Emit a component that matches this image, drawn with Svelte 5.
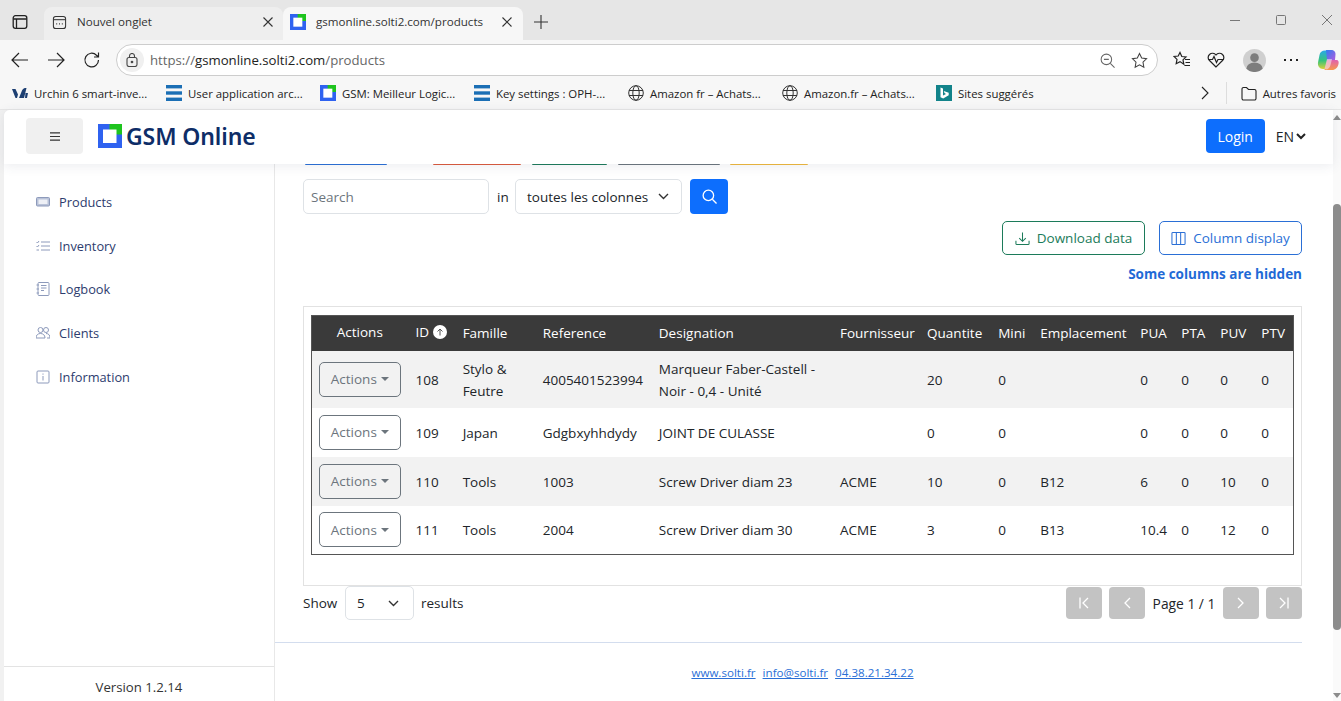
<script>
  const nav = [
    { label: 'Products', icon: 'box' },
    { label: 'Inventory', icon: 'list' },
    { label: 'Logbook', icon: 'book' },
    { label: 'Clients', icon: 'people' },
    { label: 'Information', icon: 'info' }
  ];
  const cols = ['Famille', 'Reference', 'Designation', 'Fournisseur', 'Quantite', 'Mini', 'Emplacement', 'PUA', 'PTA', 'PUV', 'PTV'];
  const rows = [
    ['108', 'Stylo & Feutre', '4005401523994', 'Marqueur Faber-Castell - Noir - 0,4 - Unité', '', '20', '0', '', '0', '0', '0', '0'],
    ['109', 'Japan', 'Gdgbxyhhdydy', 'JOINT DE CULASSE', '', '0', '0', '', '0', '0', '0', '0'],
    ['110', 'Tools', '1003', 'Screw Driver diam 23', 'ACME', '10', '0', 'B12', '6', '0', '10', '0'],
    ['111', 'Tools', '2004', 'Screw Driver diam 30', 'ACME', '3', '0', 'B13', '10.4', '0', '12', '0']
  ];
</script>

{#snippet logo(size)}
  <svg width={size} height={size} viewBox="0 0 24 24">
    <rect width="24" height="24" fill="#2f62f0" />
    <rect x="11.5" y="0" width="12.5" height="10.5" fill="#1ec41e" />
    <rect x="5" y="5.5" width="13.5" height="13.5" fill="#fff" />
  </svg>
{/snippet}

{#snippet bars()}
  <svg width="16" height="16" viewBox="0 0 16 16" fill="#1b6fb5"><rect width="16" height="3.4" y="0" /><rect width="16" height="3.4" y="6.3" /><rect width="16" height="3.4" y="12.6" /></svg>
{/snippet}

{#snippet globe()}
  <svg width="16" height="16" viewBox="0 0 16 16" fill="none" stroke="#333"><circle cx="8" cy="8" r="7.3" /><ellipse cx="8" cy="8" rx="3.2" ry="7.3" /><path d="M1 5.5h14M1 10.5h14" /></svg>
{/snippet}

<div class="browser">
  <div class="tabbar">
    <svg class="tabgroup" width="16" height="16" viewBox="0 0 16 16" fill="none" stroke="#222" stroke-width="1.3"><rect x="1.2" y="1.7" width="13.6" height="12.6" rx="2.2" /><path d="M1.2 5h13.6M4.5 5v9" /></svg>
    <div class="tab idle">
      <svg width="15" height="15" viewBox="0 0 16 16" fill="none" stroke="#333" stroke-width="1.1"><rect x="1.5" y="1.5" width="13" height="13" rx="2.5" /><path d="M1.5 5h13" /><path d="M4.5 9.5h1M7.5 9.5h1M10.5 9.5h1" stroke-width="1.4" /></svg>
      <span class="tabtitle">Nouvel onglet</span>
      <svg class="close" width="10" height="10" viewBox="0 0 10 10" stroke="#333" stroke-width="1.1"><path d="M.5.5l9 9M9.5.5l-9 9" /></svg>
    </div>
    <div class="tab active">
      {@render logo(16)}
      <span class="tabtitle">gsmonline.solti2.com/products</span>
      <svg class="close" width="10" height="10" viewBox="0 0 10 10" stroke="#333" stroke-width="1.1"><path d="M.5.5l9 9M9.5.5l-9 9" /></svg>
    </div>
    <svg class="plus" width="14" height="14" viewBox="0 0 14 14" stroke="#333" stroke-width="1.1"><path d="M7 0v14M0 7h14" /></svg>
    <div class="winctl">
      <svg width="10" height="10" viewBox="0 0 10 10" stroke="#777"><path d="M0 5.5h10" /></svg>
      <svg width="10" height="10" viewBox="0 0 10 10" fill="none" stroke="#777"><rect x=".5" y=".5" width="9" height="9" rx="1" /></svg>
      <svg width="10" height="10" viewBox="0 0 10 10" stroke="#777"><path d="M0 0l10 10M10 0L0 10" /></svg>
    </div>
  </div>

  <div class="toolbar">
    <svg class="navicon" width="18" height="16" viewBox="0 0 18 16" fill="none" stroke="#222" stroke-width="1.2"><path d="M17 8H1M8 1L1 8l7 7" /></svg>
    <svg class="navicon" width="18" height="16" viewBox="0 0 18 16" fill="none" stroke="#222" stroke-width="1.2"><path d="M1 8h16M10 1l7 7-7 7" /></svg>
    <svg class="navicon" width="18" height="18" viewBox="0 0 18 18" fill="none" stroke="#222" stroke-width="1.2"><path d="M15.5 9a6.8 6.8 0 1 1-2-4.8L15.5 6M15.5 1.5V6H11" /></svg>
    <div class="address">
      <span class="lock"><svg width="12" height="14" viewBox="0 0 12 14" fill="none" stroke="#444" stroke-width="1.1"><rect x="1" y="4.5" width="10" height="9" rx="2" /><path d="M3.5 4.5V3a2.5 2.5 0 0 1 5 0v1.5" /><circle cx="6" cy="9" r=".8" fill="#444" /></svg></span>
      <span class="url">https://<b>gsmonline.solti2.com</b>/products</span>
      <svg class="zoomout" width="15" height="15" viewBox="0 0 16 16" fill="none" stroke="#666" stroke-width="1.1"><circle cx="6.8" cy="6.8" r="5.6" /><path d="M11 11l4.5 4.5M4.2 6.8h5.2" /></svg>
      <svg class="star" width="17" height="17" viewBox="0 0 18 18" fill="none" stroke="#444" stroke-width="1.1"><path d="M9 1.5l2.3 4.9 5.2.7-3.8 3.7.9 5.3L9 13.5l-4.6 2.6.9-5.3L1.5 7.1l5.2-.7z" /></svg>
    </div>
    <div class="extras">
      <svg width="18" height="18" viewBox="0 0 18 18" fill="none" stroke="#222" stroke-width="1.2"><path d="M7 1.5l1.8 4 4.2.5-3 2.9.8 4.3L7 10.600l-3.800 2.100.8-4.300-3-2.900 4.200-.5zM12 8.500h5M12.500 11.500h4.500M11.500 14.500h5.500" /></svg>
      <svg width="18" height="18" viewBox="0 0 18 18" fill="none" stroke="#222" stroke-width="1.2"><path d="M9 16L2.500 9.500a4 4 0 0 1 0-6 4.300 4.300 0 0 1 6.500.5 4.300 4.300 0 0 1 6.500-.5 4 4 0 0 1 0 6z" /><path d="M1.500 8.500h4l1.500-3 2.500 6 1.500-3h5.500" /></svg>
      <svg class="avatar" width="23" height="23" viewBox="0 0 24 24"><circle cx="12" cy="12" r="12" fill="#cfcfcf" /><circle cx="12" cy="9" r="4.500" fill="#7d7d7d" /><path d="M3.500 20.500a8.500 6.500 0 0 1 17 0 12 12 0 0 1-17 0z" fill="#7d7d7d" /></svg>
      <svg class="dots" width="14" height="4" viewBox="0 0 14 4" fill="#222"><rect y="1" width="2" height="2" /><rect x="6" y="1" width="2" height="2" /><rect x="12" y="1" width="2" height="2" /></svg>
      <svg class="copilot" width="22" height="22" viewBox="0 0 22 22">
        <defs>
          <linearGradient id="cpa" x1="0" y1="0" x2="0" y2="1"><stop offset="0" stop-color="#2aa8e8" /><stop offset=".55" stop-color="#36c47a" /><stop offset="1" stop-color="#d8d23a" /></linearGradient>
          <linearGradient id="cpb" x1="0" y1="0" x2="1" y2="1"><stop offset="0" stop-color="#2f7df0" /><stop offset="1" stop-color="#b05be0" /></linearGradient>
          <linearGradient id="cpc" x1="0" y1="0" x2="0" y2="1"><stop offset="0" stop-color="#e060b0" /><stop offset="1" stop-color="#f79a4a" /></linearGradient>
        </defs>
        <path d="M8 1.500h5L8.500 20H6C2.500 20 .5 17 1 13.500L2.500 6C3 3 5 1.500 8 1.500z" fill="url(#cpa)" />
        <path d="M9 1h5c3 0 4.800 2 4.500 4.500L18 11H10z" fill="url(#cpb)" />
        <path d="M10 11h9.500c2 0 2.500 2 2 4-.8 3.500-3 6-6.500 6H7.500z" fill="url(#cpc)" />
        <path d="M10 10h5l-1.500 6c-.5 2-2 3.500-3.500 4.500L7.500 20z" fill="#f5f0f0" opacity=".55" />
      </svg>
    </div>
  </div>

  <div class="bookmarks">
    <span class="bm"><svg width="16" height="12" viewBox="0 0 16 12" fill="#1d3f72"><path d="M0 2h3.500L6 7.500 5 11H3.500zM7 11l3-7.500C10.800 2 12 1 13 1l1.500 0L12 11zM13.500 6H16l-1 5h-2z" /></svg>Urchin 6 smart-inve...</span>
    <span class="bm">{@render bars()}User application arc...</span>
    <span class="bm">{@render logo(16)}GSM: Meilleur Logic...</span>
    <span class="bm">{@render bars()}Key settings : OPH-...</span>
    <span class="bm">{@render globe()}Amazon fr – Achats...</span>
    <span class="bm">{@render globe()}Amazon.fr – Achats...</span>
    <span class="bm"><svg width="16" height="16" viewBox="0 0 16 16"><rect width="16" height="16" fill="#12838a" /><path d="M4.500 2.500l2.500.9v7l3-1.500-1.500-.8-.8-2.200 5 1.800v2.500l-5.500 3.300-2.700-1.300z" fill="#fff" /></svg>Sites suggérés</span>
    <svg class="more" width="8" height="14" viewBox="0 0 8 14" fill="none" stroke="#222" stroke-width="1.1"><path d="M1 1l6 6-6 6" /></svg>
    <span class="sep"></span>
    <span class="bm last"><svg width="16" height="15" viewBox="0 0 16 15" fill="none" stroke="#222" stroke-width="1.1"><path d="M1 3a1.500 1.500 0 0 1 1.500-1.500h3L7.500 3.500h6A1.500 1.500 0 0 1 15 5v7.500a1.500 1.500 0 0 1-1.500 1.500h-11A1.500 1.500 0 0 1 1 12.500z" /></svg>Autres favoris</span>
  </div>

  <div class="viewport">
    <div class="app">
      <header>
        <button class="burger" aria-label="menu"><svg width="10" height="9" viewBox="0 0 10 9" stroke="#333" stroke-width="1.2"><path d="M0 .8h10M0 4.500h10M0 8.200h10" /></svg></button>
        <span class="brandmark">{@render logo(24)}</span>
        <span class="brand">GSM Online</span>
        <button class="login">Login</button>
        <span class="lang">EN<svg width="10" height="7" viewBox="0 0 10 7" fill="none" stroke="#222" stroke-width="2"><path d="M1 1l4 4 4-4" /></svg></span>
      </header>

      <div class="body">
        <aside>
          <nav>
            {#each nav as item}
              <div class="navitem">
                <svg width="14" height="14" viewBox="0 0 14 14" fill="none" stroke="#8d9abb" stroke-width="1">
                  {#if item.icon === 'box'}
                    <rect x=".5" y="2.500" width="13" height="8.500" rx="1" fill="#b9c2d8" /><rect x="2.500" y="4.500" width="9" height="4.500" fill="#eef0f6" stroke="none" />
                  {:else if item.icon === 'list'}
                    <path d="M5 3h9M5 7h9M5 11h9M.5 3l1 1 1.500-2M.5 7l1 1 1.500-2M.5 11h2.500" />
                  {:else if item.icon === 'book'}
                    <rect x="2" y=".5" width="11" height="13" rx="1" /><path d="M5 3.500h5.500M5 6h5.500M5 8.500h3M.5 3h2.500M.5 7h2.500M.5 11h2.500" />
                  {:else if item.icon === 'people'}
                    <circle cx="4.500" cy="4" r="2.500" /><circle cx="10" cy="4" r="2.500" /><path d="M0 12c0-3 2-4.500 4.500-4.500S9 9 9 12zM10 7.500c2.500 0 4 1.500 4 4.500h-3" />
                  {:else}
                    <rect x="1" y="1" width="12" height="12" rx="1" /><path d="M7 6v4.500M7 3.500v1.200" />
                  {/if}
                </svg>
                <span>{item.label}</span>
              </div>
            {/each}
          </nav>
          <div class="version">Version 1.2.14</div>
        </aside>

        <main>
          <div class="stubs">
            <span class="stub blue"></span>
            <span class="stub red"></span>
            <span class="stub green"></span>
            <span class="stub gray"></span>
            <span class="stub yellow"></span>
          </div>

          <div class="search">
            <div class="field input">Search</div>
            <span class="in">in</span>
            <div class="field select">toutes les colonnes
              <svg width="11" height="7" viewBox="0 0 11 7" fill="none" stroke="#333" stroke-width="1.400"><path d="M1 1l4.500 4.500L10 1" /></svg>
            </div>
            <button class="go" aria-label="search"><svg width="15" height="15" viewBox="0 0 16 16" fill="none" stroke="#fff" stroke-width="1.400"><circle cx="6.800" cy="6.800" r="5.600" /><path d="M11 11l4.500 4.500" /></svg></button>
          </div>

          <div class="tools">
            <button class="tool dl">
              <svg width="15" height="15" viewBox="0 0 16 16" fill="none" stroke="#1c7b5a" stroke-width="1.100"><path d="M8 1.500v9M4.500 7.500L8 11l3.500-3.500M1 10.500v3a1 1 0 0 0 1 1h12a1 1 0 0 0 1-1v-3" /></svg>
              Download data
            </button>
            <button class="tool cols">
              <svg width="15" height="15" viewBox="0 0 16 16" fill="none" stroke="#2a6fd6" stroke-width="1.100"><rect x="1" y="1.500" width="14" height="13" rx="1" /><path d="M5.700 1.500v13M10.300 1.500v13" /></svg>
              Column display
            </button>
          </div>
          <div class="hidden-note">Some columns are hidden</div>

          <div class="tablebox">
            <table>
              <colgroup>
                <col class="c1" /><col class="c2" /><col class="c3" /><col class="c4" /><col class="c5" /><col class="c6" />
                <col class="c7" /><col class="c8" /><col class="c9" /><col class="c10" /><col class="c11" /><col class="c12" /><col class="c13" />
              </colgroup>
              <thead>
                <tr>
                  <th class="center lift">Actions</th>
                  <th class="lift"><span class="idhead">ID <span class="sort"><svg width="8" height="8" viewBox="0 0 8 8" fill="none" stroke="#555" stroke-width="1"><path d="M4 7.500V1M1.500 3.500L4 1l2.500 2.500" /></svg></span></span></th>
                  {#each cols as c}<th>{c}</th>{/each}
                </tr>
              </thead>
              <tbody>
                {#each rows as r, i}
                  <tr class:shade={i % 2 === 0} class:tall={i === 0}>
                    <td class="center"><span class="actions">Actions<i class="caret"></i></span></td>
                    {#each r as v}<td>{v}</td>{/each}
                  </tr>
                {/each}
              </tbody>
            </table>
          </div>

          <div class="pager">
            <span class="show">Show</span>
            <div class="field size">5
              <svg width="11" height="7" viewBox="0 0 11 7" fill="none" stroke="#333" stroke-width="1.400"><path d="M1 1l4.500 4.500L10 1" /></svg>
            </div>
            <span>results</span>
            <div class="pages">
              <button class="pg first-pg" aria-label="first"><svg width="10" height="12" viewBox="0 0 10 12" fill="none" stroke="#fff" stroke-width="1.300"><path d="M1 .5v11M9 1L4 6l5 5" /></svg></button>
              <button class="pg" aria-label="previous"><svg width="8" height="12" viewBox="0 0 8 12" fill="none" stroke="#fff" stroke-width="1.300"><path d="M7 1L2 6l5 5" /></svg></button>
              <span class="pagetext">Page 1 / 1</span>
              <button class="pg" aria-label="next"><svg width="8" height="12" viewBox="0 0 8 12" fill="none" stroke="#fff" stroke-width="1.300"><path d="M1 1l5 5-5 5" /></svg></button>
              <button class="pg" aria-label="last"><svg width="10" height="12" viewBox="0 0 10 12" fill="none" stroke="#fff" stroke-width="1.300"><path d="M9 .5v11M1 1l5 5-5 5" /></svg></button>
            </div>
          </div>

          <div class="rule"></div>
          <div class="foot">
            <a href="#top">www.solti.fr</a>
            <a href="#top">info@solti.fr</a>
            <a href="#top">04.38.21.34.22</a>
          </div>
        </main>
      </div>
    </div>

    <div class="scrollbar">
      <i class="arrow up"></i>
      <div class="thumb"></div>
      <i class="arrow down"></i>
    </div>
  </div>
</div>

<style>
  :global(body) {
    margin: 0;
    overflow: hidden;
  }
  .browser {
    width: 1341px;
    height: 701px;
    display: flex;
    flex-direction: column;
    overflow: hidden;
    background: #f7f7f7;
    font-family: "Open Sans", "Noto Sans", sans-serif;
    color: #212529;
  }
  svg {
    display: block;
    flex: none;
  }

  /* browser chrome */
  .tabbar {
    height: 40px;
    background: #e6e6e6;
    display: flex;
    align-items: flex-end;
    flex: none;
  }
  .tabgroup {
    margin: 0 16px 10px 12px;
  }
  .tab {
    height: 33px;
    box-sizing: border-box;
    display: flex;
    align-items: center;
    padding: 0 11px 3px 7px;
    border-radius: 8px 8px 0 0;
  }
  .tab.idle {
    width: 239px;
    background: #eeeeee;
    padding-left: 8px;
    padding-right: 10px;
  }
  .tab.active {
    width: 240px;
    background: #f7f7f7;
  }
  .tabtitle {
    margin-left: 10px;
    padding-bottom: 1px;
    flex: 1;
    color: #333;
    font-size: 11.600px;
  }
  .plus {
    margin: 0 0 11px 11px;
  }
  .winctl {
    margin-left: auto;
    display: flex;
    gap: 36px;
    padding: 0 9px 15px 0;
  }
  .toolbar {
    height: 40px;
    flex: none;
    display: flex;
    align-items: center;
    padding-left: 11px;
  }
  .navicon {
    margin-right: 18px;
  }
  .navicon:nth-child(3) {
    margin-right: 15px;
  }
  .address {
    width: 1042px;
    height: 32px;
    box-sizing: border-box;
    border: 1px solid #cdcdcd;
    border-radius: 16px;
    background: #fff;
    display: flex;
    align-items: center;
    font-size: 13.200px;
    color: #666;
  }
  .lock {
    width: 24px;
    height: 24px;
    margin: 0 6px 0 3px;
    border-radius: 50%;
    background: #f0f0f0;
    display: flex;
    align-items: center;
    justify-content: center;
  }
  .url b {
    font-weight: 400;
    color: #222;
  }
  .zoomout {
    margin-left: auto;
  }
  .star {
    margin: 0 9px 0 16px;
  }
  .extras {
    display: flex;
    align-items: center;
    gap: 16px;
    margin-left: 15px;
  }
  .avatar {
    margin-left: 2px;
  }
  .dots {
    margin-left: 2px;
  }
  .copilot {
    margin-left: 3px;
  }
  .bookmarks {
    height: 30px;
    flex: none;
    box-sizing: border-box;
    border-bottom: 1px solid #e6e6e6;
    display: flex;
    align-items: center;
    padding: 0 0 3px 12px;
    font-size: 11.400px;
    color: #222;
  }
  .bm {
    width: 154px;
    flex: none;
    display: flex;
    align-items: center;
    gap: 6px;
    white-space: nowrap;
  }
  .more {
    margin-left: auto;
  }
  .sep {
    width: 1px;
    height: 22px;
    background: #ddd;
    margin: 0 14px 0 17px;
  }
  .bm.last {
    width: auto;
    margin-right: 5px;
  }

  /* page */
  .viewport {
    flex: 1;
    min-height: 0;
    display: flex;
    background: #f1f1f1;
  }
  .app {
    flex: 1;
    min-width: 0;
    margin-left: 4px;
    display: flex;
    flex-direction: column;
    background: #fff;
    border-radius: 6px 0 0 0;
  }
  header {
    height: 54px;
    flex: none;
    box-sizing: border-box;
    display: flex;
    align-items: center;
    padding: 0 27px 2px 22px;
    background: #fff;
    box-shadow: 0 2px 12px rgba(60, 70, 100, 0.1);
    position: relative;
    z-index: 2;
    border-radius: 6px 0 0 0;
  }
  .burger {
    width: 57px;
    height: 36px;
    border: 0;
    border-radius: 4px;
    background: #f0f0f0;
    display: flex;
    align-items: center;
    justify-content: center;
    padding: 0;
  }
  .brandmark {
    margin-left: 15px;
  }
  .brand {
    margin-left: 4px;
    font-size: 23px;
    font-weight: 600;
    color: #0e2d67;
    font-family: "Noto Sans", sans-serif;
    letter-spacing: -0.1px;
  }
  .login {
    margin-left: auto;
    width: 59px;
    height: 34px;
    border: 0;
    border-radius: 4px;
    background: #0d6efd;
    color: #fff;
    font: inherit;
    font-size: 14px;
  }
  .lang {
    margin-left: 11px;
    display: flex;
    align-items: center;
    gap: 2px;
    font-size: 14px;
  }
  .body {
    flex: 1;
    min-height: 0;
    display: flex;
  }
  aside {
    width: 270px;
    flex: none;
    box-sizing: content-box;
    border-right: 1px solid #e8e8e8;
    display: flex;
    flex-direction: column;
  }
  nav {
    flex: 1;
    padding: 16px 0 0 32px;
  }
  .navitem {
    height: 43.750px;
    display: flex;
    align-items: center;
    gap: 9px;
    font-size: 12.800px;
    color: #2d3c6e;
  }
  .version {
    height: 35px;
    border-top: 1px solid #e3e3e3;
    display: flex;
    align-items: center;
    justify-content: center;
    font-size: 13.200px;
    padding-top: 6px;
    box-sizing: border-box;
    color: #333;
  }
  main {
    flex: 1;
    min-width: 0;
    padding: 0 31px 0 28px;
    font-size: 13.500px;
  }
  .stubs {
    height: 1px;
    display: flex;
  }
  .stub {
    display: block;
    border-radius: 0 0 3px 3px;
  }
  .blue { width: 82px; margin-left: 2px; background: #2a6fd6; }
  .red { width: 88px; margin-left: 46px; background: #dc5a3c; }
  .green { width: 75px; margin-left: 11px; background: #1c7b5a; }
  .gray { width: 102px; margin-left: 11px; background: #6c757d; }
  .yellow { width: 78px; margin-left: 10px; background: #f0b83c; }
  .search {
    margin-top: 14px;
    height: 35px;
    display: flex;
    align-items: center;
    gap: 8px;
  }
  .in {
    width: 11px;
    margin-right: -1px;
  }
  .field {
    height: 35px;
    box-sizing: border-box;
    border: 1px solid #dee2e6;
    border-radius: 5px;
    display: flex;
    align-items: center;
    background: #fff;
    flex: none;
  }
  .input {
    width: 186px;
    padding-left: 7px;
    color: #6c757d;
  }
  .select {
    width: 167px;
    padding: 0 12px 0 11px;
    justify-content: space-between;
  }
  .go {
    width: 38px;
    height: 35px;
    border: 0;
    border-radius: 4px;
    background: #0d6efd;
    display: flex;
    align-items: center;
    justify-content: center;
    padding: 0;
  }
  .tools {
    margin-top: 7px;
    display: flex;
    justify-content: flex-end;
    gap: 14px;
  }
  .tool {
    width: 143px;
    height: 34px;
    border-radius: 5px;
    background: #fff;
    display: flex;
    align-items: center;
    justify-content: center;
    gap: 7px;
    font: inherit;
    padding: 0;
  }
  .dl {
    border: 1px solid #1c7b5a;
    color: #1c7b5a;
  }
  .cols {
    border: 1px solid #2a6fd6;
    color: #2a6fd6;
  }
  .hidden-note {
    margin-top: 9px;
    height: 20px;
    line-height: 20px;
    text-align: right;
    font-weight: 700;
    font-size: 13.500px;
    color: #1f6ad6;
  }
  .tablebox {
    margin-top: 22px;
    height: 280px;
    box-sizing: border-box;
    border: 1px solid #e2e2e2;
    padding: 8px 7px 0;
  }
  table {
    width: 983px;
    table-layout: fixed;
    border-collapse: collapse;
    border: 1px solid #555;
  }
  .c1 { width: 96px; }
  .c2 { width: 47px; }
  .c3 { width: 80px; }
  .c4 { width: 116px; }
  .c5 { width: 181px; }
  .c6 { width: 87px; }
  .c7 { width: 71px; }
  .c8 { width: 42px; }
  .c9 { width: 100px; }
  .c10 { width: 41px; }
  .c11 { width: 39px; }
  .c12 { width: 41px; }
  .c13 { width: 40px; }
  th {
    height: 35px;
    padding: 0 0 0 8px;
    box-sizing: border-box;
    background: #3a3a3a;
    color: #fff;
    font-weight: 400;
    text-align: left;
    white-space: nowrap;
  }
  th.lift {
    padding-bottom: 2px;
  }
  th.center, td.center {
    padding-left: 0;
    text-align: center;
  }
  .idhead {
    display: flex;
    align-items: center;
    gap: 4px;
  }
  .sort {
    display: flex;
    width: 14px;
    height: 14px;
    border-radius: 50%;
    background: #fff;
    align-items: center;
    justify-content: center;
  }
  td {
    height: 49px;
    box-sizing: border-box;
    padding: 1px 0 0 8px;
    line-height: 22px;
    color: #212529;
  }
  td.center {
    padding-top: 0;
  }
  tr.tall td {
    height: 57px;
  }
  tr.shade td {
    background: #f2f2f2;
  }
  .actions {
    display: inline-flex;
    align-items: center;
    justify-content: center;
    gap: 4px;
    width: 82px;
    height: 35px;
    box-sizing: border-box;
    border: 1px solid #6c757d;
    border-radius: 5px;
    color: #6c757d;
  }
  .caret {
    width: 0;
    height: 0;
    border: 4px solid transparent;
    border-top-color: #6c757d;
    border-bottom: 0;
  }
  .pager {
    height: 34px;
    display: flex;
    align-items: center;
    gap: 7px;
  }
  .show {
    width: 35px;
  }
  .size {
    width: 69px;
    height: 34px;
    padding: 0 14px 0 11px;
    justify-content: space-between;
  }
  .pages {
    margin-left: auto;
    display: flex;
    align-items: center;
    gap: 7px;
  }
  .pg {
    width: 36px;
    height: 32px;
    border: 0;
    border-radius: 4px;
    background: #c3c3c3;
    display: flex;
    align-items: center;
    justify-content: center;
    padding: 0;
  }
  .pagetext {
    width: 64px;
    text-align: center;
    font-size: 13.800px;
  }
  .rule {
    margin: 22px 0 0 -28px;
    border-top: 1px solid #d3ddee;
  }
  .foot {
    margin-top: 22px;
    display: flex;
    justify-content: center;
    gap: 7px;
    font-size: 11.600px;
  }
  .foot a {
    color: #2a6fd6;
  }
  .scrollbar {
    width: 8px;
    flex: none;
    background: #fafafa;
    display: flex;
    flex-direction: column;
    align-items: center;
    padding-top: 5px;
    box-sizing: border-box;
  }
  .thumb {
    width: 8px;
    height: 426px;
    margin-top: 84px;
    background: #8c8c8c;
    border-radius: 4px;
  }
  .arrow {
    width: 0;
    height: 0;
    border-left: 4px solid transparent;
    border-right: 4px solid transparent;
  }
  .up {
    border-bottom: 5px solid #8c8c8c;
  }
  .down {
    border-top: 5px solid #8c8c8c;
    margin-top: auto;
    margin-bottom: 3px;
  }
</style>
